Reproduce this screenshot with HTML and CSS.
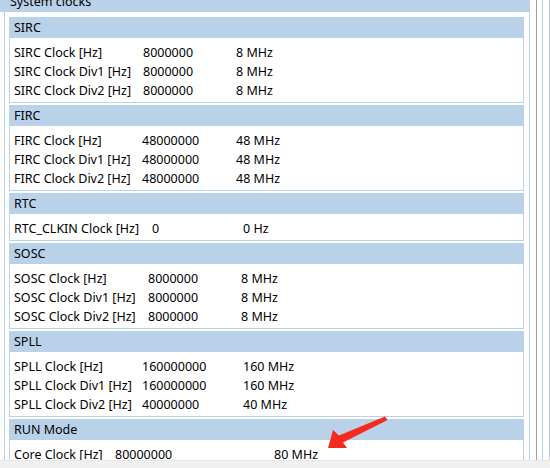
FILE: index.html
```html
<!DOCTYPE html>
<html>
<head>
<meta charset="utf-8">
<link rel="stylesheet" href="styles.css">
</head>
<body>
<div class="screen">
  <div class="viewport">
    <div class="panel">
      <div class="panel-title">System clocks</div>
      <div class="panel-body">
        <div class="group g-sirc">
          <div class="group-title">SIRC</div>
          <div class="group-body">
            <span>SIRC Clock [Hz]</span><span>8000000</span><span>8 MHz</span>
            <span>SIRC Clock Div1 [Hz]</span><span>8000000</span><span>8 MHz</span>
            <span>SIRC Clock Div2 [Hz]</span><span>8000000</span><span>8 MHz</span>
          </div>
        </div>
        <div class="group g-firc">
          <div class="group-title">FIRC</div>
          <div class="group-body">
            <span>FIRC Clock [Hz]</span><span>48000000</span><span>48 MHz</span>
            <span>FIRC Clock Div1 [Hz]</span><span>48000000</span><span>48 MHz</span>
            <span>FIRC Clock Div2 [Hz]</span><span>48000000</span><span>48 MHz</span>
          </div>
        </div>
        <div class="group g-rtc">
          <div class="group-title">RTC</div>
          <div class="group-body">
            <span>RTC_CLKIN Clock [Hz]</span><span>0</span><span>0 Hz</span>
          </div>
        </div>
        <div class="group g-sosc">
          <div class="group-title">SOSC</div>
          <div class="group-body">
            <span>SOSC Clock [Hz]</span><span>8000000</span><span>8 MHz</span>
            <span>SOSC Clock Div1 [Hz]</span><span>8000000</span><span>8 MHz</span>
            <span>SOSC Clock Div2 [Hz]</span><span>8000000</span><span>8 MHz</span>
          </div>
        </div>
        <div class="group g-spll">
          <div class="group-title">SPLL</div>
          <div class="group-body">
            <span>SPLL Clock [Hz]</span><span>160000000</span><span>160 MHz</span>
            <span>SPLL Clock Div1 [Hz]</span><span>160000000</span><span>160 MHz</span>
            <span>SPLL Clock Div2 [Hz]</span><span>40000000</span><span>40 MHz</span>
          </div>
        </div>
        <div class="group g-run">
          <div class="group-title">RUN Mode</div>
          <div class="group-body">
            <span>Core Clock [Hz]</span><span>80000000</span><span>80 MHz</span>
          </div>
        </div>
      </div>
    </div>
    <div class="side">
      <div class="gap6"></div>
      <div class="line gray"></div>
      <div class="gap5"></div>
      <div class="line blue"></div>
      <div class="gap6"></div>
      <div class="line blue"></div>
    </div>
  </div>
  <div class="hscroll"></div>
  <svg class="arrow" width="70" height="40" viewBox="320 412 70 40">
    <polygon points="328,448 333,430 339,435.5 385,416.5 387.5,420 343,442.5 347,448" fill="#f52a1c"/>
  </svg>
</div>
</body>
</html>
```
FILE: styles.css
```css
html, body {
  margin: 0;
  padding: 0;
  background: #ffffff;
}
body {
  font-family: "Noto Sans", "Open Sans", sans-serif;
  font-size: 12.5px;
  color: #000000;
  overflow: hidden;
}
.screen {
  position: relative;
  width: 550px;
  height: 468px;
  overflow: hidden;
}
.viewport {
  display: flex;
  height: 460px;
  overflow: hidden;
}
.panel {
  width: 530px;
  flex: none;
  display: flex;
  flex-direction: column;
}
.panel-title {
  margin-top: -9px;
  height: 21px;
  line-height: 21px;
  padding-left: 10px;
  background: #bad1ea;
}
.panel-body {
  margin-left: 4px;
  border-left: 1px solid #bad1ea;
  border-right: 1px solid #bad1ea;
  padding: 5px 5px 0 4px;
  flex: 1;
}
.group {
  margin-bottom: 2px;
}
.group-title {
  height: 21px;
  line-height: 21px;
  padding-left: 5px;
  background: #bad1ea;
}
.group-body {
  display: grid;
  border: 1px solid #bad1ea;
  border-top: none;
  padding: 5px 0 2px 4px;
  grid-auto-rows: 19px;
  line-height: 19px;
  white-space: nowrap;
}
.g-sirc .group-body { grid-template-columns: 129px 93px 1fr; }
.g-firc .group-body { grid-template-columns: 128px 94px 1fr; }
.g-rtc .group-body { grid-template-columns: 138px 91px 1fr; }
.g-sosc .group-body { grid-template-columns: 134px 93px 1fr; }
.g-spll .group-body { grid-template-columns: 128px 101px 1fr; }
.g-run .group-body { grid-template-columns: 101px 159px 1fr; }
.side {
  display: flex;
  width: 20px;
  flex: none;
}
.gap6 { width: 6px; }
.gap5 { width: 5px; }
.line { width: 1px; }
.line.gray { background: #a0a0a0; }
.line.blue { background: #bad1ea; }
.hscroll {
  height: 7px;
  background: #f0f0f0;
  border-top: 1px solid #e6e6e6;
}
.arrow {
  position: absolute;
  left: 320px;
  top: 412px;
}
```
